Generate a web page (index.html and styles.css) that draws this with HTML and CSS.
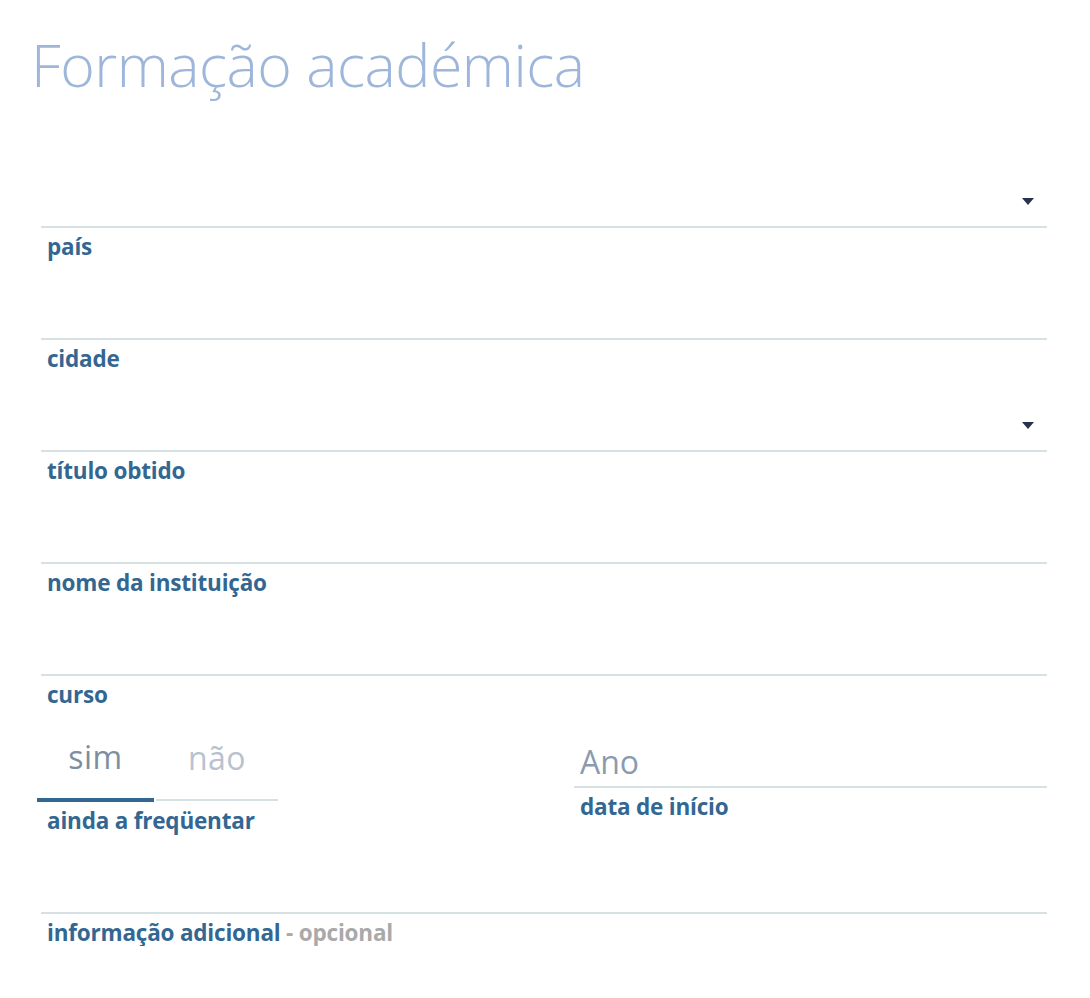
FILE: index.html
```html
<!DOCTYPE html>
<html lang="pt">
<head>
<meta charset="utf-8">
<title>Formação académica</title>
<link rel="stylesheet" href="styles.css">
</head>
<body>
<div class="page">
  <div class="title-wrap"><h1 class="title">Formação académica</h1></div>

  <div class="field">
    <div class="input select"><span class="caret"></span></div>
    <label class="label">país</label>
  </div>

  <div class="field">
    <div class="input"></div>
    <label class="label">cidade</label>
  </div>

  <div class="field">
    <div class="input select"><span class="caret"></span></div>
    <label class="label">título obtido</label>
  </div>

  <div class="field">
    <div class="input"></div>
    <label class="label">nome da instituição</label>
  </div>

  <div class="field">
    <div class="input"></div>
    <label class="label">curso</label>
  </div>

  <div class="row">
    <div class="toggle-field">
      <div class="toggle">
        <span class="tab tab-active">sim</span>
        <span class="tab tab-off">não</span>
      </div>
      <label class="label label-toggle">ainda a freqüentar</label>
    </div>
    <div class="field">
      <div class="input input-text"><span class="placeholder">Ano</span></div>
      <label class="label">data de início</label>
    </div>
  </div>

  <div class="field">
    <div class="input input-area"></div>
    <label class="label">informação adicional <span class="optional">- opcional</span></label>
  </div>
</div>
</body>
</html>
```

FILE: styles.css
```css
* { box-sizing: border-box; }

html, body {
  margin: 0;
  padding: 0;
  background: #ffffff;
}

body {
  font-family: "Open Sans", "Noto Sans", "Liberation Sans", sans-serif;
}

.page {
  width: 1090px;
  padding: 0 43px 0 41px;
  display: flex;
  flex-direction: column;
}

.title-wrap {
  height: 148px;
  padding-top: 26px;
  margin-left: -10px;
}

.title {
  margin: 0;
  font-weight: 300;
  font-size: 59px;
  line-height: 76px;
  color: #9db6da;
  letter-spacing: -0.5px;
}

.field {
  display: flex;
  flex-direction: column;
}

.input {
  height: 80px;
  border-bottom: 2px solid #d6e1e4;
  display: flex;
  align-items: flex-end;
  padding: 0 6px 6px;
}

.input-text {
  padding-bottom: 4px;
}

.select {
  justify-content: flex-end;
  padding: 0 13px 21px 0;
}

.caret {
  width: 0;
  height: 0;
  border-left: 6px solid transparent;
  border-right: 6px solid transparent;
  border-top: 7px solid #26344f;
}

.label {
  display: block;
  height: 32px;
  padding: 6px 0 0 6px;
  font-size: 22.5px;
  line-height: 26px;
  font-weight: 700;
  color: #336792;
  letter-spacing: -0.2px;
}

.optional {
  color: #a9a9a9;
}

.row {
  display: grid;
  grid-template-columns: 533px 1fr;
}

.toggle-field {
  display: flex;
  flex-direction: column;
  margin-left: -4px;
}

.toggle {
  display: flex;
  gap: 2px;
  height: 94px;
  align-items: flex-end;
}

.tab {
  display: block;
  text-align: center;
  font-size: 32px;
  line-height: 40px;
  font-weight: 400;
  letter-spacing: 0.5px;
}

.tab-active {
  width: 117px;
  padding-bottom: 21px;
  border-bottom: 4px solid #336792;
  color: #7e8ea1;
}

.tab-off {
  width: 122px;
  padding-bottom: 21px;
  margin-bottom: 1px;
  border-bottom: 2px solid #d6e1e4;
  color: #b8c2ce;
}

.label-toggle {
  padding-left: 10px;
  padding-top: 6px;
}

.placeholder {
  font-size: 32px;
  line-height: 40px;
  color: #8a9bb0;
  font-weight: 400;
}

.input-area {
  height: 80px;
}
```
